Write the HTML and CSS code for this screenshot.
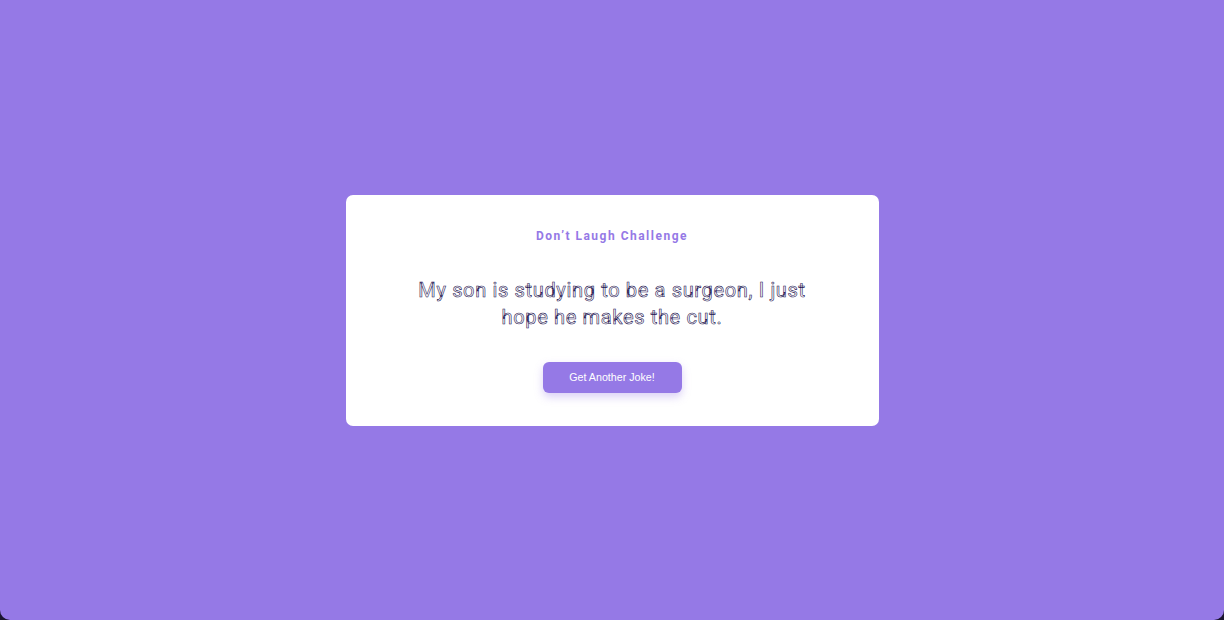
FILE: index.html
```html
<!DOCTYPE html>
<html lang="en">
<head>
<meta charset="utf-8">
<title>Don't Laugh Challenge</title>
<link rel="stylesheet" href="styles.css">
</head>
<body>
<main class="page">
  <section class="card">
    <h3 class="title">Don’t Laugh Challenge</h3>
    <p class="joke">My son is studying to be a surgeon, I just hope he makes the cut.</p>
    <button class="btn">Get Another Joke!</button>
  </section>
</main>
</body>
</html>
```
FILE: styles.css
```css
html {
  background: #1b1530;
  height: 100%;
}
body {
  margin: 0;
  height: 100%;
  font-family: Roboto, "Noto Sans", sans-serif;
}
.page {
  box-sizing: border-box;
  height: 620px;
  background: #9579e6;
  border-radius: 0 0 10px 10px;
  display: flex;
  align-items: center;
  justify-content: center;
}
.card {
  box-sizing: border-box;
  width: 533px;
  height: 231px;
  background: #ffffff;
  border-radius: 7px;
  padding: 34px 60px 0;
  display: flex;
  flex-direction: column;
  align-items: center;
}
.title {
  margin: 0;
  font-size: 12px;
  font-weight: 700;
  letter-spacing: 1.5px;
  line-height: 14px;
  color: #9579e6;
}
.joke {
  margin: 34px 0 0;
  max-width: 413px;
  text-align: center;
  font-size: 20px;
  font-weight: 400;
  letter-spacing: 0.65px;
  line-height: 27px;
  color: #ffffff;
  -webkit-text-stroke: 0.6px #1c1250;
}
.btn {
  margin-top: 31px;
  width: 139px;
  height: 31px;
  border: none;
  border-radius: 6px;
  background: #9579e6;
  color: #ffffff;
  font-family: "Liberation Sans", Arial, sans-serif;
  font-size: 10.7px;
  box-shadow: 0 4px 8px rgba(149, 121, 230, 0.35);
  cursor: pointer;
}
```
